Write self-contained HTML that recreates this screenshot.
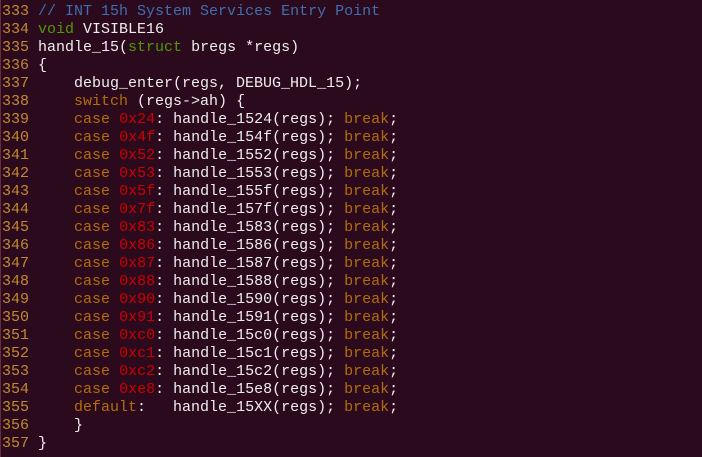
<!DOCTYPE html>
<html><head><style>
html,body{margin:0;padding:0;}
body{width:702px;height:457px;background:#2c0a1e;overflow:hidden;position:relative;border-left:1px solid #6a2a3a;box-sizing:border-box;}
pre{margin:0;position:absolute;left:1px;top:3px;font-family:"Liberation Mono",monospace;font-size:15px;line-height:18px;color:#eeeeec;}
.n{color:#c08a30}.c{color:#3f6fb0}.g{color:#4e9a06}.k{color:#b36d0a}.h{color:#cc0000}
</style></head><body><pre><span class="n">333</span> <span class="c">// INT 15h System Services Entry Point</span>
<span class="n">334</span> <span class="g">void</span> VISIBLE16
<span class="n">335</span> handle_15(<span class="g">struct</span> bregs *regs)
<span class="n">336</span> {
<span class="n">337</span>     debug_enter(regs, DEBUG_HDL_15);
<span class="n">338</span>     <span class="k">switch</span> (regs-&gt;ah) {
<span class="n">339</span>     <span class="k">case</span> <span class="h">0x24</span>: handle_1524(regs); <span class="k">break</span>;
<span class="n">340</span>     <span class="k">case</span> <span class="h">0x4f</span>: handle_154f(regs); <span class="k">break</span>;
<span class="n">341</span>     <span class="k">case</span> <span class="h">0x52</span>: handle_1552(regs); <span class="k">break</span>;
<span class="n">342</span>     <span class="k">case</span> <span class="h">0x53</span>: handle_1553(regs); <span class="k">break</span>;
<span class="n">343</span>     <span class="k">case</span> <span class="h">0x5f</span>: handle_155f(regs); <span class="k">break</span>;
<span class="n">344</span>     <span class="k">case</span> <span class="h">0x7f</span>: handle_157f(regs); <span class="k">break</span>;
<span class="n">345</span>     <span class="k">case</span> <span class="h">0x83</span>: handle_1583(regs); <span class="k">break</span>;
<span class="n">346</span>     <span class="k">case</span> <span class="h">0x86</span>: handle_1586(regs); <span class="k">break</span>;
<span class="n">347</span>     <span class="k">case</span> <span class="h">0x87</span>: handle_1587(regs); <span class="k">break</span>;
<span class="n">348</span>     <span class="k">case</span> <span class="h">0x88</span>: handle_1588(regs); <span class="k">break</span>;
<span class="n">349</span>     <span class="k">case</span> <span class="h">0x90</span>: handle_1590(regs); <span class="k">break</span>;
<span class="n">350</span>     <span class="k">case</span> <span class="h">0x91</span>: handle_1591(regs); <span class="k">break</span>;
<span class="n">351</span>     <span class="k">case</span> <span class="h">0xc0</span>: handle_15c0(regs); <span class="k">break</span>;
<span class="n">352</span>     <span class="k">case</span> <span class="h">0xc1</span>: handle_15c1(regs); <span class="k">break</span>;
<span class="n">353</span>     <span class="k">case</span> <span class="h">0xc2</span>: handle_15c2(regs); <span class="k">break</span>;
<span class="n">354</span>     <span class="k">case</span> <span class="h">0xe8</span>: handle_15e8(regs); <span class="k">break</span>;
<span class="n">355</span>     <span class="k">default</span>:   handle_15XX(regs); <span class="k">break</span>;
<span class="n">356</span>     }
<span class="n">357</span> }</pre></body></html>
